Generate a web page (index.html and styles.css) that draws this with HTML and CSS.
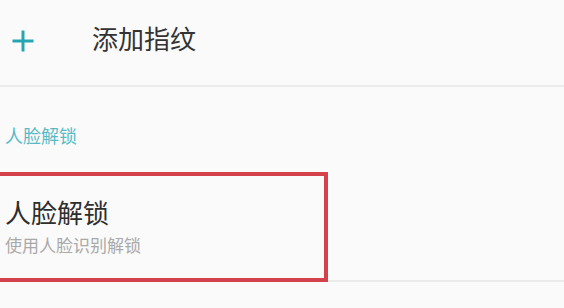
FILE: index.html
```html
<!DOCTYPE html>
<html lang="zh-CN">
<head>
<meta charset="utf-8">
<link rel="stylesheet" href="styles.css">
</head>
<body>
<div class="page">
  <div class="header">
    <svg class="plus" width="24" height="24" viewBox="0 0 24 24" aria-hidden="true">
      <path d="M12 1.5V22.5M1.5 12H22.5" stroke="#27a6b2" stroke-width="3" fill="none"/>
    </svg>
    <div class="title">添加指纹</div>
  </div>
  <div class="section-label">人脸解锁</div>
  <div class="item">
    <div class="item-title">人脸解锁</div>
    <div class="item-sub">使用人脸识别解锁</div>
    <div class="highlight"></div>
  </div>
</div>
</body>
</html>
```
FILE: styles.css
```css
html, body {
  margin: 0;
  padding: 0;
  background: #fafafa;
}
body {
  width: 564px;
  height: 308px;
  overflow: hidden;
  font-family: "Noto Sans CJK SC", "Noto Sans", sans-serif;
}
.page {
  display: flex;
  flex-direction: column;
}
.header {
  height: 85px;
  border-bottom: 2px solid #ebebeb;
  display: flex;
  align-items: flex-start;
  box-sizing: content-box;
}
.plus {
  margin-left: 11px;
  margin-top: 29px;
  flex: none;
}
.title {
  margin-left: 57px;
  margin-top: 25px;
  font-size: 26px;
  line-height: 26px;
  color: #333333;
}
.section-label {
  margin-top: 39px;
  padding-left: 5px;
  font-size: 18px;
  line-height: 18px;
  color: #58bac5;
}
.item {
  position: relative;
  margin-top: 28px;
  padding: 27px 0 27px 5px;
  border-bottom: 2px solid #ebebeb;
}
.item-title {
  font-size: 26px;
  line-height: 26px;
  color: #2e2e2e;
}
.item-sub {
  margin-top: 11px;
  font-size: 17px;
  line-height: 17px;
  color: #a9a9a9;
}
.highlight {
  position: absolute;
  top: 0;
  left: -4px;
  width: 332px;
  height: 110px;
  box-sizing: border-box;
  border: 4px solid #d4414b;
}
```
